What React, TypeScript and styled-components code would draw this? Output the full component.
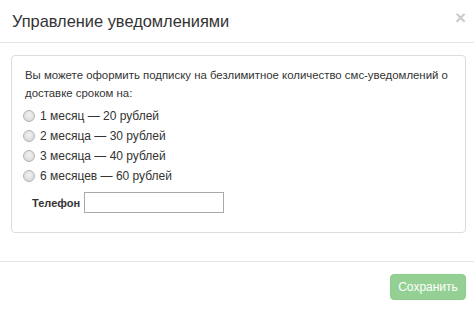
import styled, { createGlobalStyle } from 'styled-components';

const GlobalStyle = createGlobalStyle`
  html, body {
    margin: 0;
    padding: 0;
    background: #fff;
  }
  body {
    font-family: 'Liberation Sans', Arial, sans-serif;
    color: #333;
  }
`;

const plans = [
  { id: 'm1', text: '1 месяц — 20 рублей' },
  { id: 'm2', text: '2 месяца — 30 рублей' },
  { id: 'm3', text: '3 месяца — 40 рублей' },
  { id: 'm6', text: '6 месяцев — 60 рублей' },
];

const App = () => {
  return (
    <>
      <GlobalStyle />
      <Modal>
        <Header>
          <Title>Управление уведомлениями</Title>
          <Close type='button'>×</Close>
        </Header>
        <Body>
          <Panel>
            <Intro>
              Вы можете оформить подписку на безлимитное количество смс-уведомлений о доставке сроком на:
            </Intro>
            <Options>
              {plans.map((plan) => (
                <Option key={plan.id}>
                  <Radio type='radio' name='plan' value={plan.id} />
                  <span>{plan.text}</span>
                </Option>
              ))}
            </Options>
            <PhoneRow>
              <PhoneLabel htmlFor='phone'>Телефон</PhoneLabel>
              <PhoneInput id='phone' type='text' />
            </PhoneRow>
          </Panel>
        </Body>
        <Footer>
          <SaveButton type='button' disabled>
            Сохранить
          </SaveButton>
        </Footer>
      </Modal>
    </>
  );
};

export default App;

const Modal = styled.div`
  width: 474px;
  height: 313px;
  background: #fff;
  overflow: hidden;
`;

const Header = styled.div`
  display: flex;
  align-items: center;
  justify-content: space-between;
  padding: 8px 8px 8px 12px;
  border-bottom: 1px solid #e5e5e5;
`;

const Title = styled.h4`
  margin: 0;
  font-size: 16.4px;
  font-weight: normal;
  line-height: 26px;
  color: #333;
`;

const Close = styled.button`
  padding: 0;
  border: none;
  background: none;
  font-family: 'Liberation Sans', Arial, sans-serif;
  font-size: 19px;
  font-weight: bold;
  line-height: 20px;
  color: #000;
  opacity: 0.2;
  align-self: flex-start;
`;

const Body = styled.div`
  padding: 12px 8px 28px 11px;
  border-bottom: 1px solid #e5e5e5;
`;

const Panel = styled.div`
  border: 1px solid #ddd;
  border-radius: 4px;
  padding: 10px 13px 19px 13px;
  font-size: 12px;
`;

const Intro = styled.p`
  margin: 0 0 4px;
  font-size: 11.4px;
  line-height: 18px;
`;

const Options = styled.div`
  display: flex;
  flex-direction: column;
`;

const Option = styled.label`
  display: flex;
  align-items: center;
  gap: 5px;
  height: 20px;
  line-height: 20px;
`;

const Radio = styled.input`
  appearance: none;
  margin: 0 0 0 -2px;
  width: 12px;
  height: 12px;
  border-radius: 50%;
  border: 1px solid #b4b4b4;
  background: radial-gradient(circle at 50% 40%, #f2f2f2 0%, #dcdcdc 70%, #cfcfcf 100%);
`;

const PhoneRow = styled.div`
  display: flex;
  align-items: center;
  gap: 4px;
  margin-top: 6px;
  padding-left: 7px;
`;

const PhoneLabel = styled.label`
  font-weight: bold;
  font-size: 11px;
  color: #333;
`;

const PhoneInput = styled.input`
  box-sizing: border-box;
  width: 140px;
  height: 21px;
  border: 1px solid #a9a9a9;
  padding: 0 4px;
  font-family: inherit;
`;

const Footer = styled.div`
  display: flex;
  justify-content: flex-end;
  padding: 12px 8px 12px 15px;
`;

const SaveButton = styled.button`
  box-sizing: border-box;
  width: 76px;
  height: 26px;
  border: 1px solid #8ccd8c;
  border-radius: 4px;
  background: #94d094;
  color: #fff;
  font-family: 'Liberation Sans', Arial, sans-serif;
  font-size: 12px;
  line-height: 24px;
  padding: 0;
`;
